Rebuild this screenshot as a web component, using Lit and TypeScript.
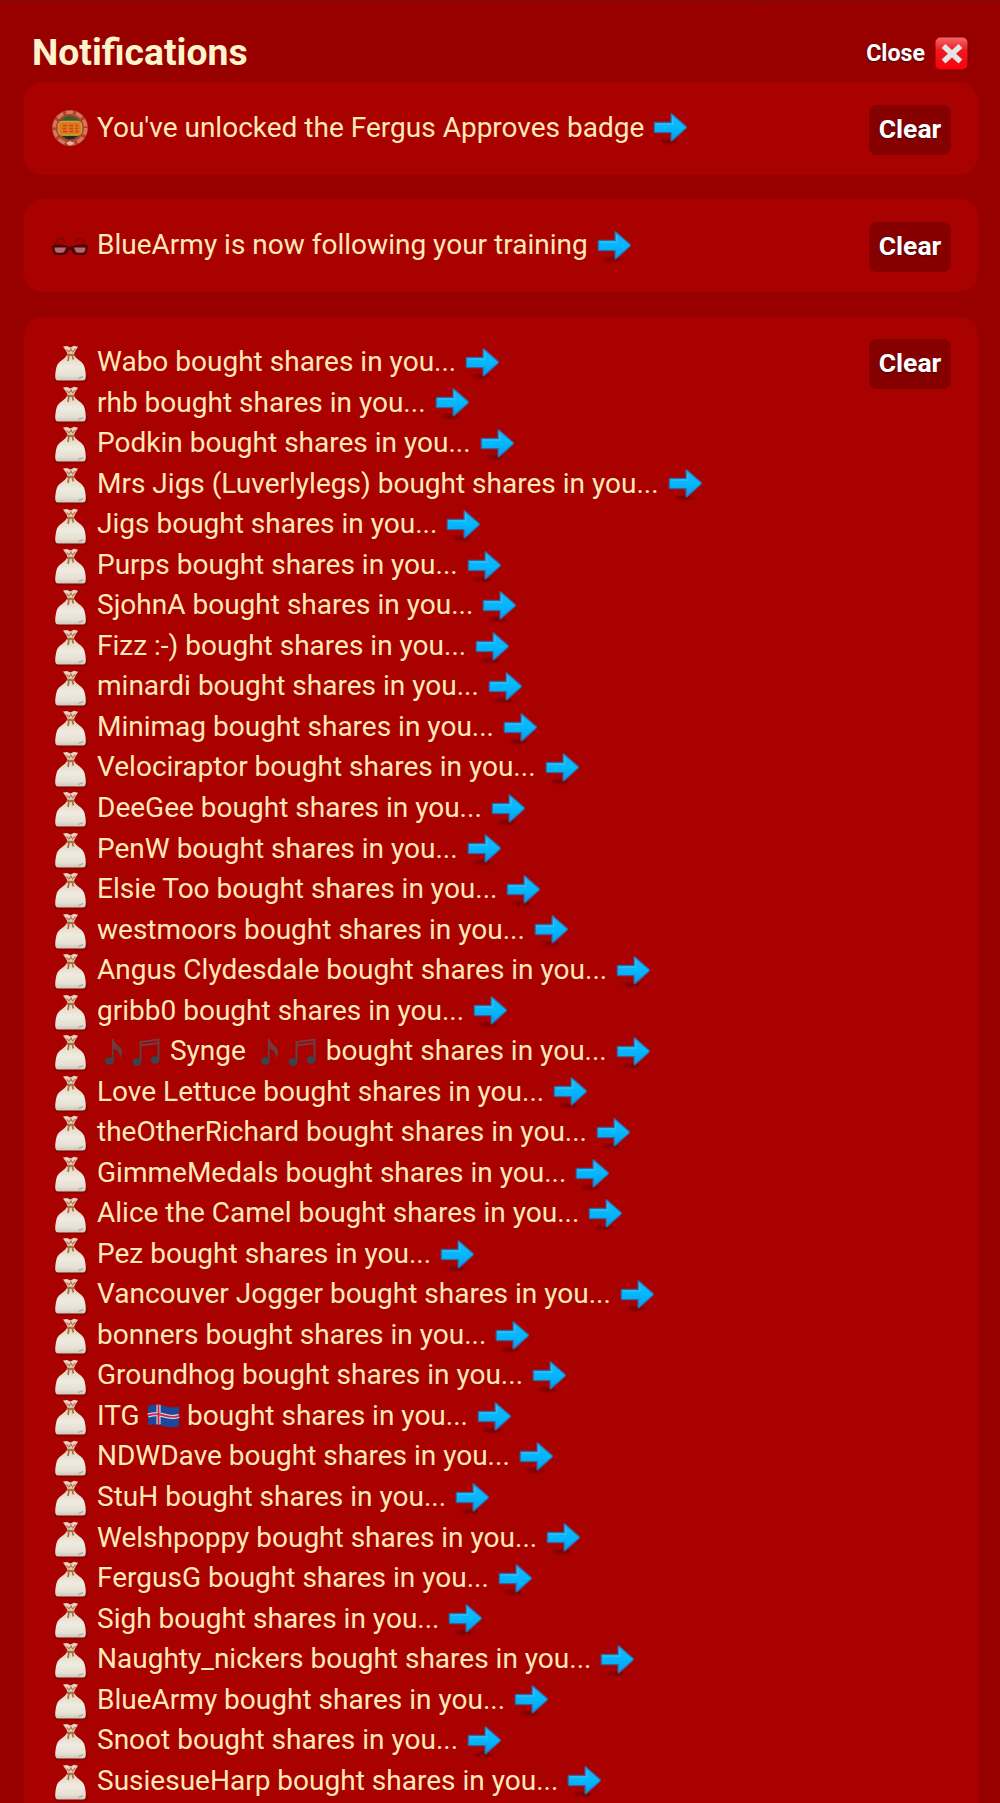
import { LitElement, html, css, svg } from "lit";
import { customElement } from "lit/decorators.js";

type Part = string | { icon: "note" | "notes" | "flag" };

const names: Part[][] = [
  ["Wabo"], ["rhb"], ["Podkin"], ["Mrs Jigs (Luverlylegs)"], ["Jigs"], ["Purps"], ["SjohnA"], ["Fizz :-)"],
  ["minardi"], ["Minimag"], ["Velociraptor"], ["DeeGee"], ["PenW"], ["Elsie Too"], ["westmoors"],
  ["Angus Clydesdale"], ["gribb0"],
  [{ icon: "note" }, { icon: "notes" }, " Synge ", { icon: "note" }, { icon: "notes" }],
  ["Love Lettuce"], ["theOtherRichard"], ["GimmeMedals"], ["Alice the Camel"], ["Pez"], ["Vancouver Jogger"],
  ["bonners"], ["Groundhog"], ["ITG ", { icon: "flag" }], ["NDWDave"], ["StuH"], ["Welshpoppy"], ["FergusG"],
  ["Sigh"], ["Naughty_nickers"], ["BlueArmy"], ["Snoot"], ["SusiesueHarp"],
];

const defs = svg`
  <linearGradient id="b" x1="0" y1="0" x2="0" y2="1"><stop offset="0" stop-color="#e4d3bd"/><stop offset=".45" stop-color="#efebe0"/><stop offset=".8" stop-color="#e6e0d4"/><stop offset="1" stop-color="#cfc6b6"/></linearGradient>
  <linearGradient id="a" x1="0" y1="0" x2="0" y2="1"><stop offset="0" stop-color="#1fb4f8"/><stop offset=".5" stop-color="#04b8fc"/><stop offset="1" stop-color="#0a9af0"/></linearGradient>
  <linearGradient id="c" x1="0" y1="0" x2="0" y2="1"><stop offset="0" stop-color="#f4686a"/><stop offset=".4" stop-color="#f01820"/><stop offset="1" stop-color="#fa0008"/></linearGradient>
  <linearGradient id="n" gradientUnits="userSpaceOnUse" x1="0" y1="3" x2="0" y2="27"><stop offset="0" stop-color="#7a3a3e"/><stop offset=".6" stop-color="#5a4448"/><stop offset="1" stop-color="#3c4248"/></linearGradient>
  <filter id="s" x="-20%" y="-30%" width="140%" height="160%"><feGaussianBlur stdDeviation=".9"/></filter>`;

const bag = html`<svg class="lead" viewBox="0 0 38 40">${defs}
  <path d="M4 34Q3 38.500 8 38.500H32Q37 38.500 36 33" fill="#5d0000" opacity=".7" filter="url(#s)"/>
  <path d="M15.500 12.500C14 16 8 18 6 22.500C4.600 26.500 4 32 4.300 35Q4.600 37.500 7 37.600H32Q34.500 37.500 34.700 35C35 31.500 34.500 26.500 33 22.500C31 18 25 16 23.500 12.500Z" fill="url(#b)"/>
  <path d="M12 3.500L16 3L19.500 4.500L23 2.700L27 3.800L24 8.500L22.500 12H17L15.500 8.500Z" fill="#e8d3c0"/>
  <path d="M15.500 6.500L18 9L20 6L21.500 9L24.500 6" fill="none" stroke="#bd7a5a" stroke-width="1.200"/>
  <path d="M15.800 11.500H23.500M18 12L17 18M21.300 12L22.300 16.500" fill="none" stroke="#a9703f" stroke-width="1.700"/>
  <path d="M27.500 35.500L32 33.500" stroke="#aaa295" stroke-width="1.300"/></svg>`;

const arrow = html`<svg class="arrow" viewBox="0 0 38 38">${defs}
  <ellipse cx="17" cy="32.500" rx="9" ry="2.200" fill="#600000" opacity=".6" filter="url(#s)"/>
  <path d="M3 13.300H19V5.500Q19 4 20.300 5.200L34 17.200Q35 18.300 34 19.400L20.300 31.500Q19 32.600 19 31V23.700H3Q2.200 23.700 2.200 22.900V14.100Q2.200 13.300 3 13.300Z" fill="url(#a)" stroke="#3f5f98" stroke-width="1.200"/>
  <path d="M4 15.200H20.800V8.800" fill="none" stroke="#4acbfc" stroke-width="1.200" opacity=".6"/></svg>`;

const badge = html`<svg class="lead" viewBox="0 0 38 40">
  <circle cx="19" cy="19" r="18" fill="#b8402e"/><circle cx="19" cy="19" r="15.800" fill="none" stroke="#d2785c" stroke-width="3.400" stroke-dasharray="7 3"/>
  <circle cx="19" cy="19" r="12.500" fill="#7d5a24"/><path d="M9 13Q12 7 19 7Q26 7 29 13Z" fill="#3f5a2c"/><path d="M11 27Q19 34 27 27Z" fill="#232a1e"/>
  <rect x="7.500" y="12.500" width="23" height="13.500" rx="4" fill="#e2761c" stroke="#c7a03c" stroke-width="1.500"/>
  <path d="M12 16.500H16M12 19.500H15M12 22.500H16M18.500 16.500H22M18.500 19.500H22M18.500 22.500H22M24.500 16.500H27M24.500 19.500H27M24.500 22.500H27" fill="none" stroke="#c44415" stroke-width="1.500"/>
  <path d="M15 34L19 32L23 34L19 36.500Z" fill="#e6b6a4"/></svg>`;

const shades = html`<svg class="lead" viewBox="0 0 38 40">
  <path d="M4 19Q6 12 10.500 12.500Q13 13 13.500 16M34 19Q32 12 27.500 12.500Q25 13 24.500 16" fill="none" stroke="#7c0505" stroke-width="1.500"/>
  <path d="M1 19.500Q9 17.500 16 20Q19 21 22 20Q29 17.500 37 19.500L36 26Q35 29 31 29H26Q22.500 29 20.500 24.500Q19 23 17.500 24.500Q15.500 29 12 29H7Q3 29 2 26Z" fill="#4e0507"/>
  <path d="M3.500 21.500H15Q13.500 26.800 11 26.800H7Q3.500 26.800 3.500 21.500ZM34.500 21.500H23Q24.500 26.800 27 26.800H31Q34.500 26.800 34.500 21.500Z" fill="#b5686e"/></svg>`;

const cross = html`<svg class="cross" viewBox="0 0 36 36">${defs}
  <rect x="2" y="2" width="33" height="33" rx="6" fill="#640000" opacity=".5" filter="url(#s)"/>
  <rect x="1.500" y="1.500" width="32" height="32" rx="5" fill="url(#c)"/>
  <path d="M9.500 10L26.500 25.500M26.500 10L9.500 25.500" stroke="#e3e5e5" stroke-width="5.600"/></svg>`;

const inline = {
  note: html`<svg class="note" viewBox="0 0 33 32">${defs}<ellipse cx="12.500" cy="25" rx="4.500" ry="3.800" fill="#3a444a"/><path d="M15.800 25V3Q17 8 21 10.500Q26 14 23.500 19.500Q23 13.500 16 11.500" fill="#6a3a3e" stroke="url(#n)" stroke-width="1.500"/></svg>`,
  notes: html`<svg class="notes" viewBox="0 0 33 32">${defs}<ellipse cx="7" cy="26" rx="4.300" ry="3.700" fill="#3a444a"/><ellipse cx="25" cy="24" rx="4.300" ry="3.700" fill="#3a444a"/><path d="M10.500 26V6L28.500 3.500V24M10.500 9.500L28.500 7" fill="none" stroke="url(#n)" stroke-width="1.900"/></svg>`,
  flag: html`<svg class="flag" viewBox="0 0 33.500 24"><path d="M1 2Q9 -.5 17 2Q25 4.500 32 2.500V22Q25 24.500 17 22Q9 19.500 1 21Z" fill="#1c489c"/>
    <path d="M11.500 .8V20.300M1 11.500Q9 9 17 11.500Q25 14 32 12" fill="none" stroke="#dde2f0" stroke-width="4"/>
    <path d="M11.500 .8V20.300M1 11.500Q9 9 17 11.500Q25 14 32 12" fill="none" stroke="#cf2b45" stroke-width="1.900"/></svg>`,
};

@customElement("app-root")
export class AppRoot extends LitElement {
  static styles = css`
    :host { display: block; height: 1803px; overflow: hidden; box-sizing: border-box; padding: 24px 22px 0 24px;
      background: linear-gradient(#860707 0, #980000 5px, #980000 100%);
      font-family: Roboto, "Liberation Sans", sans-serif; font-size: 28.030px; color: #ffe9b8; }
    header { display: flex; justify-content: space-between; height: 58px; padding: 0 8px; }
    h1 { margin: 0; font-size: 37.300px; line-height: 57px; font-weight: 700; color: #fff3cc; }
    .close { display: flex; align-items: center; gap: 9px; height: 60px; font: inherit; font-size: 23.200px; font-weight: 700; color: #fff; background: none; border: 0; padding: 0; text-shadow: 0 1px 2px #4a0000; }
    .close span { padding-bottom: 2px; }
    .cross { width: 36px; height: 36px; }
    .card { display: flex; justify-content: space-between; align-items: flex-start; box-sizing: border-box;
      padding: 25.500px 27px 26.700px 27px; margin-bottom: 24.600px; border-radius: 19px; background: #a90000; }
    .row { display: flex; align-items: center; height: 40.540px; white-space: pre; }
    .lead { width: 38px; height: 40px; margin: 2px 8px 0 0; flex: none; }
    .arrow { width: 38px; height: 38px; margin: 1px 0 0 8px; flex: none; }
    .text { display: flex; align-items: center; line-height: 40.540px; }
    .note, .notes { width: 33px; height: 32px; margin-top: 2px; }
    .flag { width: 33.500px; height: 24px; }
    .clear { font: inherit; font-size: 26.500px; font-weight: 700; color: #fff; background: #860000; border: 0; border-radius: 8px; width: 82px; height: 50px; padding: 0 0 3px; margin: -3px 0 -7px; text-align: center; text-shadow: 0 1px 2px #4a0000; }
  `;

  private row(lead: unknown, text: unknown) {
    return html`<div class="row">${lead}<span class="text">${text}</span>${arrow}</div>`;
  }

  private card(rows: unknown) {
    return html`<section class="card"><div>${rows}</div><button class="clear">Clear</button></section>`;
  }

  render() {
    return html`
      <header><h1>Notifications</h1><button class="close"><span>Close</span>${cross}</button></header>
      ${this.card(this.row(badge, "You've unlocked the Fergus Approves badge"))}
      ${this.card(this.row(shades, "BlueArmy is now following your training"))}
      ${this.card(names.map((n) => this.row(bag, html`${n.map((p) => (typeof p === "string" ? html`<span>${p}</span>` : inline[p.icon]))}<span> bought shares in you...</span>`)))}
    `;
  }
}
